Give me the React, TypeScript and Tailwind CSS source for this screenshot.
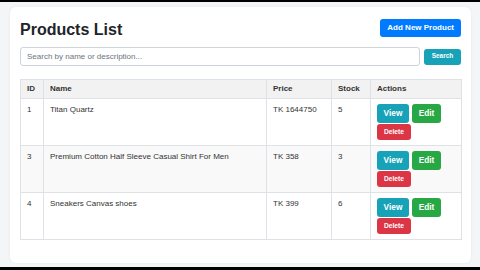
import React from "react";

type Product = { id: number; name: string; price: string; stock: number };

const products: Product[] = [
  { id: 1, name: "Titan Quartz", price: "TK 1644750", stock: 5 },
  { id: 3, name: "Premium Cotton Half Sleeve Casual Shirt For Men", price: "TK 358", stock: 3 },
  { id: 4, name: "Sneakers Canvas shoes", price: "TK 399", stock: 6 },
];

export default function App() {
  return (
    <div className="w-[480px] h-[270px] bg-black overflow-hidden font-['Liberation_Sans',Arial,sans-serif] text-[#212529]">
      <div className="mt-[2px] h-[265px] bg-[#f4f5f7] pl-[10px] pt-[5px]">
        <div className="w-[461px] h-[256px] bg-white rounded-md shadow-[0_0_3px_rgba(0,0,0,0.06)] px-[10px] pt-[12px]">
          {/* header */}
          <div className="flex items-center justify-between h-[18px]">
            <h1 className="text-[16px] font-bold leading-none mt-[3px]">Products List</h1>
            <button className="h-[18px] px-[7px] rounded-[3px] bg-[#007bff] text-white text-[8px] font-bold leading-none">
              Add New Product
            </button>
          </div>

          {/* search */}
          <div className="flex items-center gap-[4px] mt-[10px]">
            <input
              className="w-[400px] h-[19px] border border-[#ced4da] rounded-[3px] px-[6px] text-[8px] placeholder:text-[#6c757d] outline-none"
              placeholder="Search by name or description..."
            />
            <button className="w-[37px] h-[16px] rounded-[3px] bg-[#17a2b8] text-white text-[6.5px] font-bold leading-none">
              Search
            </button>
          </div>

          {/* table */}
          <table className="mt-[13px] w-[441px] table-fixed border-collapse text-[8px]">
            <colgroup>
              <col className="w-[23px]" />
              <col className="w-[223px]" />
              <col className="w-[65px]" />
              <col className="w-[39px]" />
              <col className="w-[91px]" />
            </colgroup>
            <thead>
              <tr className="bg-[#f2f2f2] h-[19px]">
                {["ID", "Name", "Price", "Stock", "Actions"].map((h) => (
                  <th key={h} className="border border-[#dee2e6] px-[6px] text-left font-bold leading-none text-[#333]">
                    {h}
                  </th>
                ))}
              </tr>
            </thead>
            <tbody className="text-[#333]">
              {products.map((p, i) => (
                <tr key={p.id} className={i === 1 ? "bg-[#f9f9f9]" : "bg-white"}>
                  <td className="border border-[#dee2e6] px-[6px] pt-[5px] pb-[5px] align-top leading-[11px]">{p.id}</td>
                  <td className="border border-[#dee2e6] px-[6px] pt-[5px] pb-[5px] align-top leading-[11px]">{p.name}</td>
                  <td className="border border-[#dee2e6] px-[6px] pt-[5px] pb-[5px] align-top leading-[11px]">{p.price}</td>
                  <td className="border border-[#dee2e6] px-[6px] pt-[5px] pb-[5px] align-top leading-[11px]">{p.stock}</td>
                  <td className="border border-[#dee2e6] px-[6px] pt-[5px] pb-[5px] align-top">
                    <div className="flex flex-wrap gap-x-[3px] gap-y-[1px] w-[78px]">
                      <button className="w-[32px] h-[19px] rounded-[3px] bg-[#17a2b8] text-white text-[8.3px] font-bold leading-none">
                        View
                      </button>
                      <button className="w-[29px] h-[19px] rounded-[3px] bg-[#28a745] text-white text-[8.3px] font-bold leading-none">
                        Edit
                      </button>
                      <button className="w-[34px] h-[16px] rounded-[3px] bg-[#dc3545] text-white text-[6.7px] font-bold leading-none">
                        Delete
                      </button>
                    </div>
                  </td>
                </tr>
              ))}
            </tbody>
          </table>
        </div>
      </div>
    </div>
  );
}
